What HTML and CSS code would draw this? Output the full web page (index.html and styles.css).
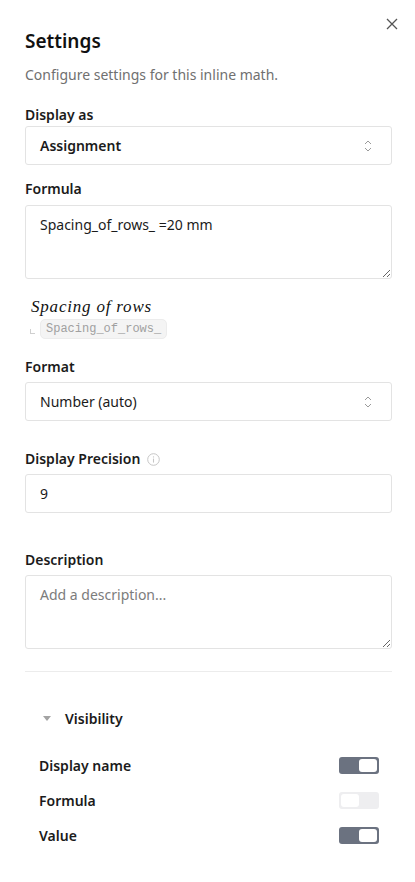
FILE: index.html
```html
<!DOCTYPE html>
<html lang="en">
<head>
<meta charset="utf-8">
<title>Settings</title>
<link rel="stylesheet" href="styles.css">
</head>
<body>
<div class="panel">
  <div class="header">
    <h1 class="title">Settings</h1>
    <button class="close" aria-label="Close">
      <svg width="12" height="12" viewBox="0 0 12 12"><path d="M1 1 L11 11 M11 1 L1 11" stroke="#555" stroke-width="1.3" fill="none"/></svg>
    </button>
  </div>
  <p class="subtitle">Configure settings for this inline math.</p>

  <div class="field f-display">
    <div class="label">Display as</div>
    <div class="select strong">
      <span>Assignment</span>
      <svg class="chev" width="8" height="12" viewBox="0 0 8 12"><path d="M1 4 L4 1 L7 4 M1 8 L4 11 L7 8" stroke="#9a9a9a" stroke-width="1" fill="none"/></svg>
    </div>
  </div>

  <div class="field f-formula">
    <div class="label">Formula</div>
    <textarea class="area">Spacing_of_rows_ =20 mm</textarea>
  </div>

  <div class="preview">
    <div class="math">Spacing of rows</div>
    <div class="varrow">
      <span class="corner"></span>
      <code class="chip">Spacing_of_rows_</code>
    </div>
  </div>

  <div class="field f-format">
    <div class="label">Format</div>
    <div class="select">
      <span>Number (auto)</span>
      <svg class="chev" width="8" height="12" viewBox="0 0 8 12"><path d="M1 4 L4 1 L7 4 M1 8 L4 11 L7 8" stroke="#9a9a9a" stroke-width="1" fill="none"/></svg>
    </div>
  </div>

  <div class="field f-precision">
    <div class="label">Display Precision
      <svg class="info" width="13" height="13" viewBox="0 0 13 13"><circle cx="6.5" cy="6.5" r="5.8" stroke="#c6c6c6" stroke-width="1" fill="none"/><circle cx="6.5" cy="3.9" r="0.7" fill="#c6c6c6"/><path d="M6.5 5.6 V9.6" stroke="#c6c6c6" stroke-width="1.1"/></svg>
    </div>
    <div class="input">9</div>
  </div>

  <div class="field f-desc">
    <div class="label">Description</div>
    <textarea class="area" placeholder="Add a description..."></textarea>
  </div>

  <hr class="divider">

  <div class="visibility">
    <div class="vis-head">
      <svg class="tri" width="8" height="6" viewBox="0 0 8 6"><path d="M0 0 H8 L4 5 Z" fill="#a3a3a3"/></svg>
      <span>Visibility</span>
    </div>
    <div class="row"><span>Display name</span><span class="toggle on"><span class="knob"></span></span></div>
    <div class="row"><span>Formula</span><span class="toggle"><span class="knob"></span></span></div>
    <div class="row"><span>Value</span><span class="toggle on"><span class="knob"></span></span></div>
  </div>
</div>
</body>
</html>
```

FILE: styles.css
```css
* { box-sizing: border-box; }
html, body {
  margin: 0;
  background: #ffffff;
}
body {
  font-family: "Noto Sans", "Open Sans", sans-serif;
  color: #1b1b1b;
  font-size: 14px;
}
.panel {
  padding: 14px 23px 40px 25px;
}
.header {
  display: flex;
  justify-content: space-between;
  align-items: flex-start;
}
.title {
  margin: 13px 0 0 0;
  font-size: 19px;
  line-height: 28px;
  font-weight: 600;
  color: #111;
}
.close {
  width: 20px;
  height: 20px;
  margin-right: -10px;
  padding: 0;
  border: 0;
  background: transparent;
  display: flex;
  align-items: center;
  justify-content: center;
}
.subtitle {
  margin: 10px 0 0 0;
  line-height: 20px;
  color: #707070;
  font-size: 14px;
}
.label {
  font-weight: 600;
  line-height: 20px;
  font-size: 14px;
  color: #1b1b1b;
  display: flex;
  align-items: center;
  gap: 7px;
}
.field { display: flex; flex-direction: column; }
.f-display { margin-top: 20px; }
.f-display .label { margin-bottom: 1px; }
.f-formula { margin-top: 14px; }
.f-formula .label { margin-bottom: 6px; }
.f-format { margin-top: 18px; }
.f-format .label { margin-bottom: 5px; }
.f-precision { margin-top: 28px; }
.f-precision .label { margin-bottom: 5px; }
.f-desc { margin-top: 37px; }
.f-desc .label { margin-bottom: 5px; }

.select, .input {
  height: 39px;
  border: 1px solid #e3e3e3;
  border-radius: 3px;
  padding: 0 19px 0 14px;
  display: flex;
  align-items: center;
  justify-content: space-between;
  font-size: 14px;
  color: #1b1b1b;
}
.select.strong { font-weight: 600; }
.chev { display: block; }
.area {
  display: block;
  width: 100%;
  height: 74px;
  border: 1px solid #e3e3e3;
  border-radius: 3px;
  padding: 9px 14px 10px;
  font-family: "Noto Sans", "Open Sans", sans-serif;
  font-size: 14px;
  line-height: 20px;
  color: #1b1b1b;
  resize: vertical;
  outline: none;
}
.area::placeholder { color: #7c7c7c; }

.preview {
  margin-top: 18px;
  padding-left: 6px;
}
.math {
  font-family: "Liberation Serif", "DejaVu Serif", serif;
  font-style: italic;
  font-size: 17px;
  letter-spacing: 0.8px;
  line-height: 20px;
  color: #111;
}
.varrow {
  display: flex;
  align-items: center;
  margin-top: 2px;
}
.corner {
  width: 5px;
  height: 5px;
  border-left: 1px solid #cfcfcf;
  border-bottom: 1px solid #cfcfcf;
  margin: 0 5px 0 0;
  position: relative;
  top: 2px;
  margin-left: -1px;
}
.chip {
  font-family: "Liberation Mono", "DejaVu Sans Mono", monospace;
  font-size: 12px;
  line-height: 18px;
  color: #a0a0a0;
  background: #f4f4f4;
  border: 1px solid #ececec;
  border-radius: 5px;
  padding: 0 5px;
}

.divider {
  border: 0;
  border-top: 1px solid #ececec;
  margin: 22px 0 0 0;
}
.visibility {
  padding-left: 14px;
  padding-right: 13px;
}
.vis-head {
  display: flex;
  align-items: center;
  margin-top: 37px;
  font-weight: 600;
  line-height: 20px;
}
.tri { margin: 0 14px 0 4px; }
.row {
  display: flex;
  justify-content: space-between;
  align-items: center;
  height: 35px;
  line-height: 20px;
  font-weight: 600;
}
.vis-head + .row { margin-top: 19px; }
.toggle {
  width: 40px;
  height: 17px;
  border-radius: 3px;
  background: #eeeef0;
  padding: 2px;
  display: flex;
  justify-content: flex-start;
}
.toggle.on {
  background: #6b7280;
  justify-content: flex-end;
}
.knob {
  width: 18px;
  height: 13px;
  background: #ffffff;
  border-radius: 3px;
}
```
